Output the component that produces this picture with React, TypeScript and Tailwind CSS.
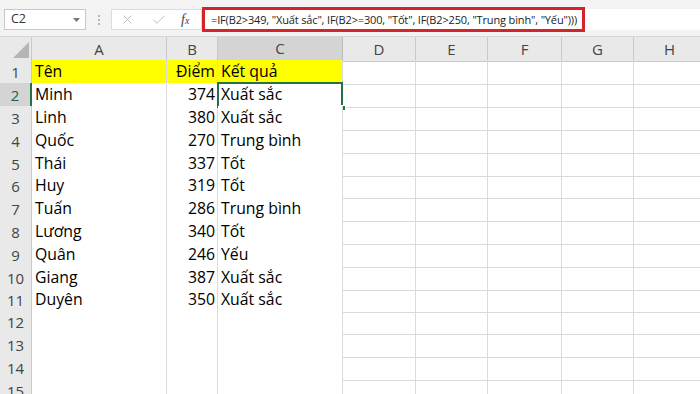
import * as React from "react";
import { X, Check } from "lucide-react";

// Dữ liệu bảng tính
const rows: { name: string; score: string; result: string }[] = [
  { name: "Tên", score: "Điểm", result: "Kết quả" },
  { name: "Minh", score: "374", result: "Xuất sắc" },
  { name: "Linh", score: "380", result: "Xuất sắc" },
  { name: "Quốc", score: "270", result: "Trung bình" },
  { name: "Thái", score: "337", result: "Tốt" },
  { name: "Huy", score: "319", result: "Tốt" },
  { name: "Tuấn", score: "286", result: "Trung bình" },
  { name: "Lương", score: "340", result: "Tốt" },
  { name: "Quân", score: "246", result: "Yếu" },
  { name: "Giang", score: "387", result: "Xuất sắc" },
  { name: "Duyên", score: "350", result: "Xuất sắc" },
  { name: "", score: "", result: "" },
  { name: "", score: "", result: "" },
  { name: "", score: "", result: "" },
  { name: "", score: "", result: "" },
];

const columns = ["A", "B", "C", "D", "E", "F", "G", "H"];
const gridCols =
  "grid grid-cols-[32px_135px_51px_125px_73px_72px_74px_72px_72px]";

function FormulaBar() {
  return (
    <div className="h-[37px] bg-[#f3f3f3] flex items-start pt-[9px] pl-[4px] border-b border-[#d6d6d6]">
      <div className="w-[82px] h-[21px] bg-white border border-[#c8c8c8] flex items-center justify-between pl-[6px] pr-[5px]">
        <span className="text-[12.5px] text-[#333] leading-none">C2</span>
        <svg width="7" height="4" viewBox="0 0 7 4">
          <path d="M0 0 L7 0 L3.5 4 Z" fill="#777" />
        </svg>
      </div>
      <div className="w-[25px] h-[21px] flex flex-col items-center justify-center gap-[2px]">
        <span className="w-[2px] h-[2px] bg-[#b8b8b8]" />
        <span className="w-[2px] h-[2px] bg-[#b8b8b8]" />
        <span className="w-[2px] h-[2px] bg-[#b8b8b8]" />
      </div>
      <div className="w-[91px] h-[21px] bg-white border border-[#dcdcdc] flex items-center pl-[8px]">
        <X className="w-[15px] h-[15px] text-[#b3b3b3]" strokeWidth={1.3} />
        <Check className="w-[16px] h-[16px] text-[#b3b3b3] ml-[16px]" strokeWidth={1.3} />
        <span className="ml-[14px] font-['Liberation_Serif'] italic text-[14px] text-[#444] leading-none">
          f<span className="text-[10px]">x</span>
        </span>
      </div>
      <div className="flex-1 h-[21px] bg-white flex items-center relative">
        <div className="absolute left-0 top-[-2px] w-[383px] h-[25px] border-[3px] border-[#d5232b]" />
        <span className="pl-[9px] text-[11px] tracking-[-0.15px] text-[#222] whitespace-nowrap leading-none">
          =IF(B2&gt;349, "Xuất sắc", IF(B2&gt;=300, "Tốt", IF(B2&gt;250, "Trung bình", "Yếu")))
        </span>
      </div>
    </div>
  );
}

function HeaderRow() {
  return (
    <div className={`${gridCols} h-[23px]`}>
      <div className="bg-[#e9e9e9] border-r border-b border-[#c9c9c9] flex items-end justify-end pr-[2px] pb-[3px]">
        <svg width="16" height="16" viewBox="0 0 16 16">
          <path d="M16 0 L16 16 L0 16 Z" fill="#b5b5b5" />
        </svg>
      </div>
      {columns.map((c) => (
        <div
          key={c}
          className={
            c === "C"
              ? "bg-[#d4d4d4] border-r border-[#bdbdbd] border-b-2 border-b-[#217346] flex items-center justify-center text-[15px] text-[#444]"
              : "bg-[#e9e9e9] border-r border-b border-[#c9c9c9] flex items-center justify-center text-[15px] text-[#444]"
          }
        >
          {c}
        </div>
      ))}
    </div>
  );
}

export default function App() {
  return (
    <div className="w-[700px] h-[394px] overflow-hidden bg-white font-['Open_Sans',sans-serif]">
      <FormulaBar />
      <HeaderRow />
      {rows.map((r, i) => {
        const num = i + 1;
        const selected = num === 2;
        const yellow = num === 1 ? "bg-[#ffff00]" : "bg-white";
        // mỗi hàng thứ 5 thấp hơn 1px để khớp chiều cao 22.8px
        const rowH = num % 5 === 0 ? "h-[22px]" : "h-[23px]";
        return (
          <div key={num} className={`${gridCols} ${rowH}`}>
            <div
              className={
                selected
                  ? "bg-[#d4d4d4] border-r-2 border-r-[#217346] border-b border-[#bdbdbd] flex items-center justify-center text-[15px] text-[#2e5b45]"
                  : "bg-[#e9e9e9] border-r border-b border-[#c9c9c9] flex items-center justify-center text-[15px] text-[#444]"
              }
            >
              {num}
            </div>
            <div className={`${yellow} border-r border-b border-[#dadada] flex items-center pl-[3px] text-[15.8px] text-black whitespace-nowrap`}>
              {r.name}
            </div>
            <div className={`${yellow} border-r border-b border-[#dadada] flex items-center justify-end pr-[2px] text-[15.8px] text-black whitespace-nowrap`}>
              {r.score}
            </div>
            <div className={`${yellow} border-r border-b border-[#dadada] flex items-center pl-[3px] text-[15.8px] text-black whitespace-nowrap relative`}>
              {r.result}
              {selected && (
                <>
                  <div className="absolute left-[-1px] top-[-1px] right-[-1px] bottom-[-1px] border-2 border-[#217346]" />
                  <div className="absolute right-[-4px] bottom-[-4px] w-[6px] h-[6px] bg-[#217346] border border-white" />
                </>
              )}
            </div>
            {columns.slice(3).map((c) => (
              <div key={c} className="border-r border-b border-[#dadada]" />
            ))}
          </div>
        );
      })}
    </div>
  );
}
